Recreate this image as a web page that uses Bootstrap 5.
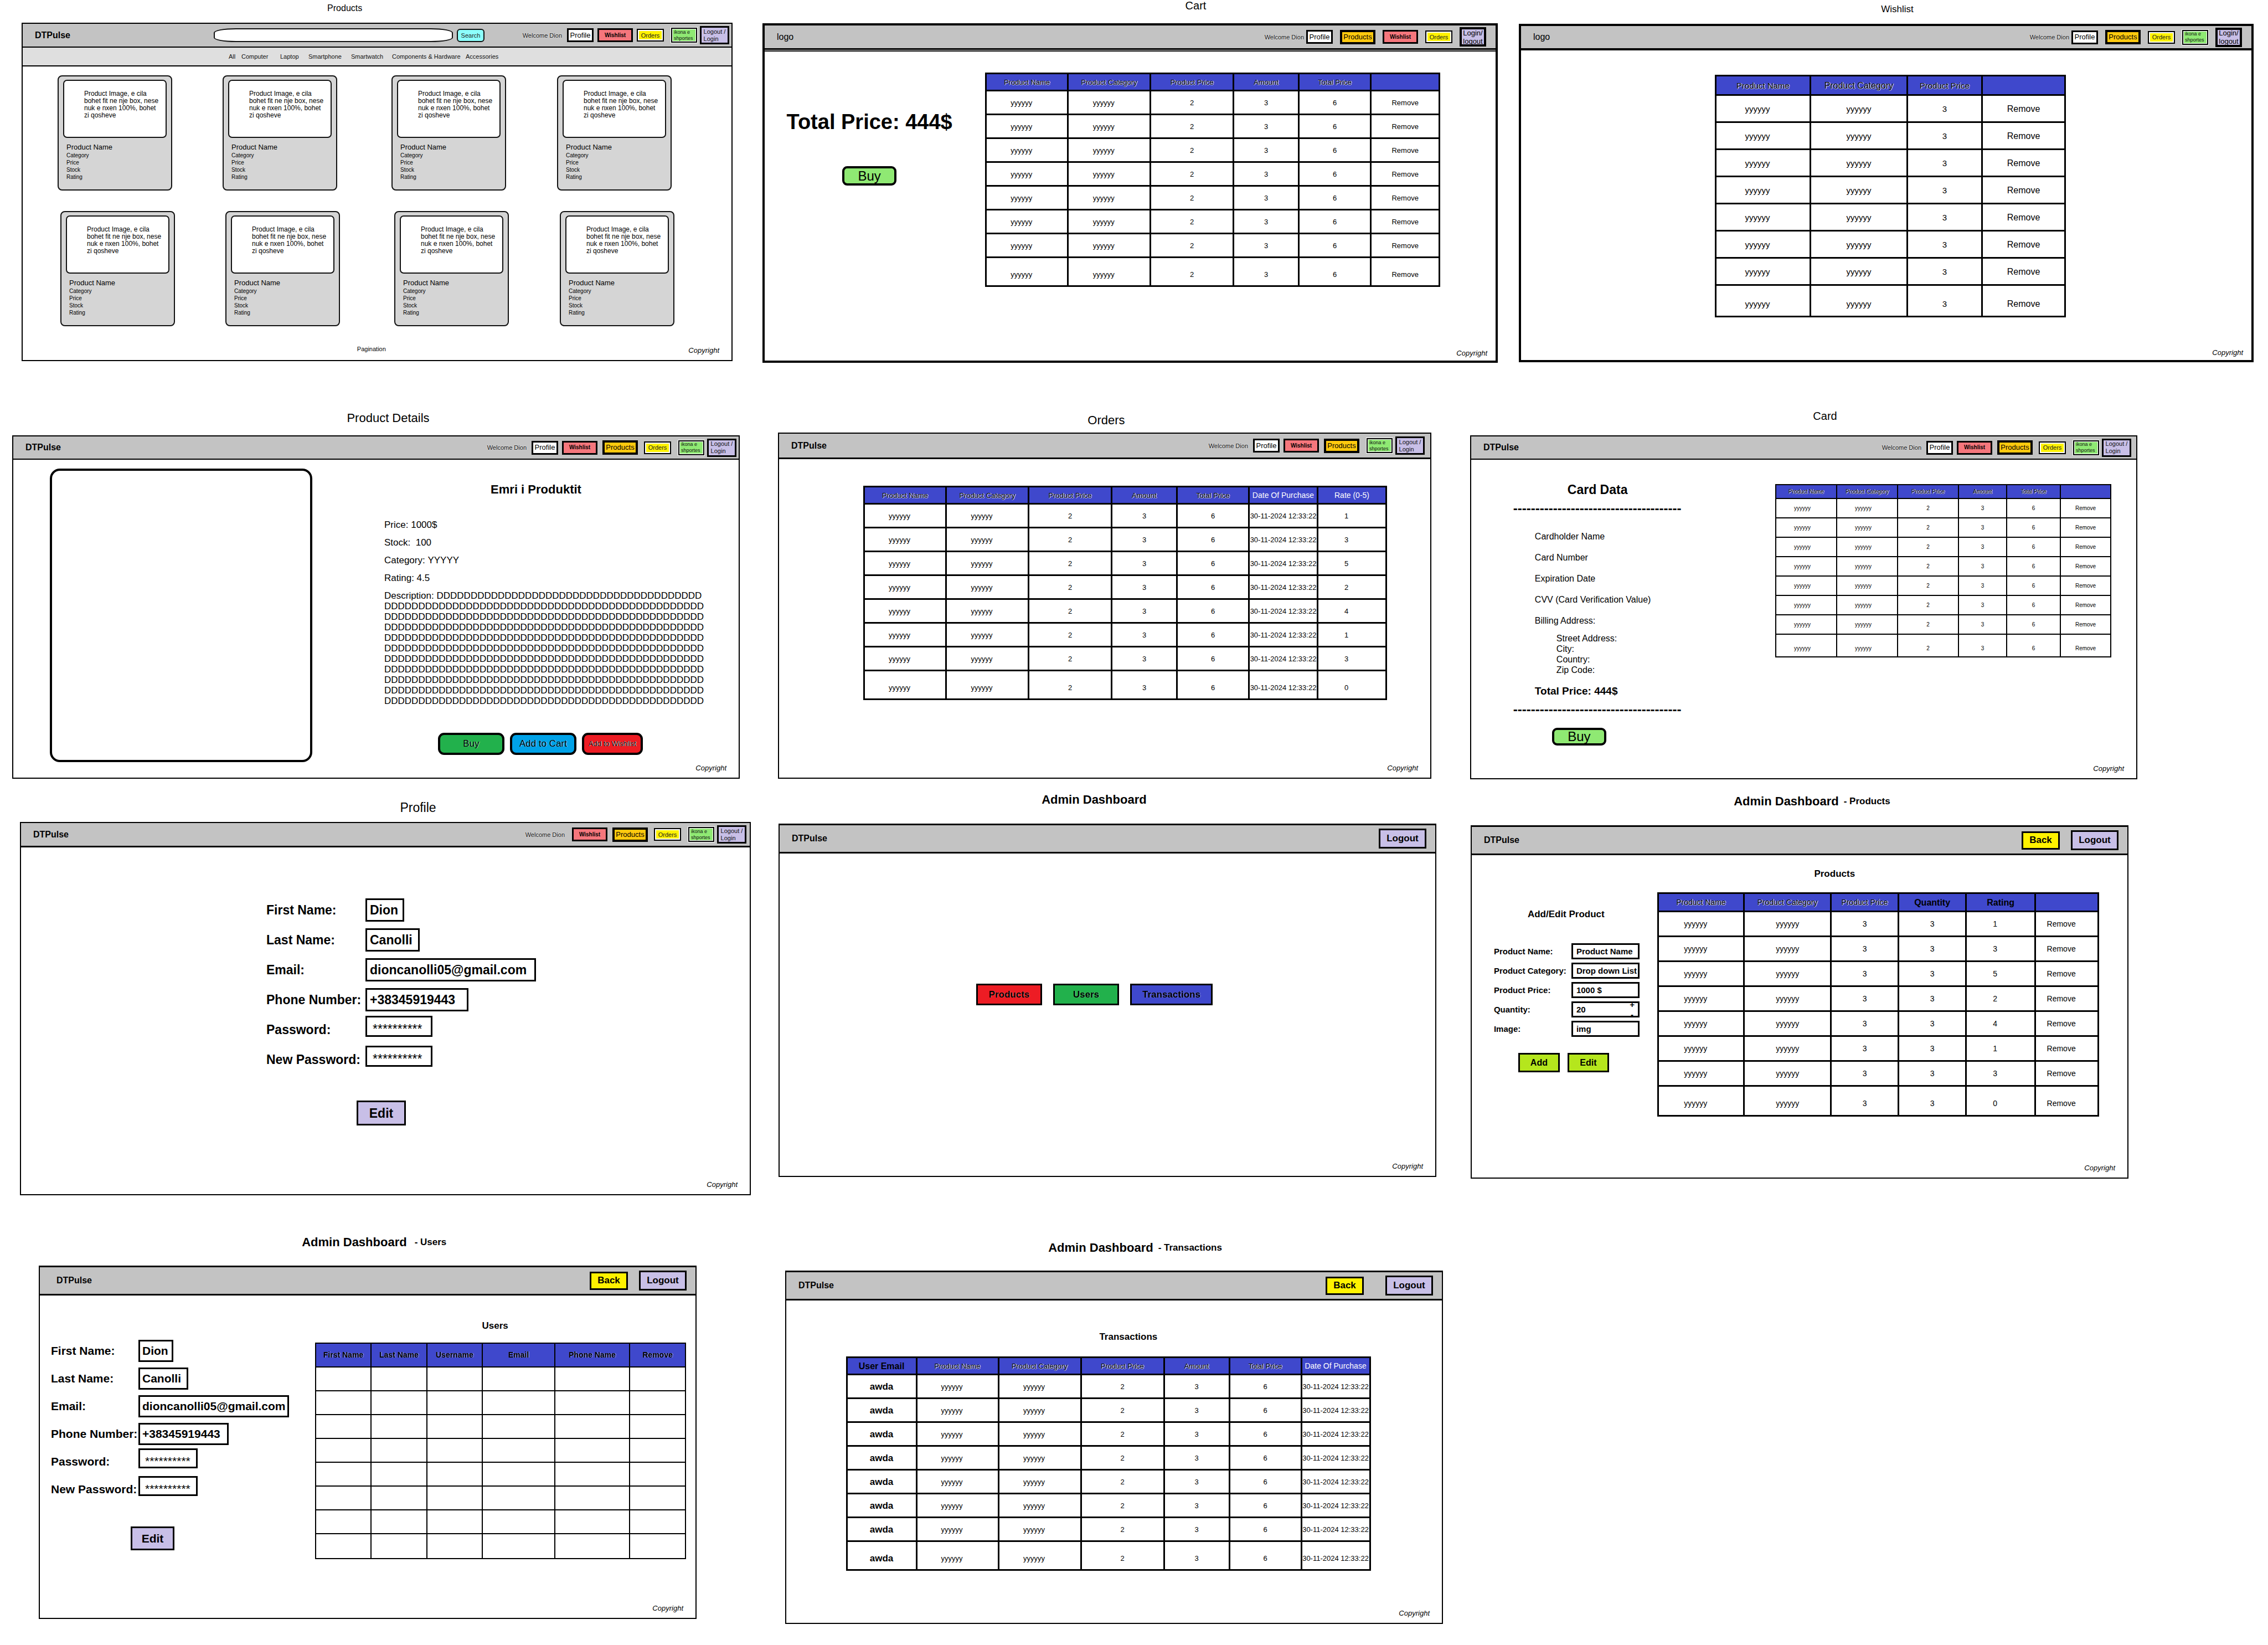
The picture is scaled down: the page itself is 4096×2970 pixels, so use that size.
<!DOCTYPE html>
<html lang="sq">
<head>
<meta charset="utf-8">
<meta name="viewport" content="width=device-width, initial-scale=1">
<title>DTPulse wireframes</title>
<link href="https://cdn.jsdelivr.net/npm/bootstrap@5.3.0/dist/css/bootstrap.min.css" rel="stylesheet">
<style>
body{font-family:"Liberation Sans",Arial,sans-serif;font-size:16px;line-height:20px;color:#000;background:#fff;overflow-x:hidden}
a{color:inherit;text-decoration:none}
/* rows of screens */
.strip{display:grid;align-items:start}
.strip-1{grid-template-columns:39fr 1284fr 54fr 1328fr 38fr 1327fr 26fr}
.strip-2{grid-template-columns:22fr 1314fr 69fr 1180fr 70fr 1205fr 236fr;margin-top:80px}
.strip-3{grid-template-columns:36fr 1320fr 50fr 1188fr 62fr 1188fr 252fr;margin-top:20px}
.strip-4{grid-template-columns:70fr 1188fr 160fr 1188fr 1490fr;margin-top:70px}
.screen{min-width:0}
.screen:nth-child(1){grid-column:2}
.screen:nth-child(2){grid-column:4}
.screen:nth-child(3){grid-column:6}
.screen-title{margin:0;line-height:20px;font-weight:400;white-space:nowrap;font-size:22px}
.screen-title small{font-size:17px;font-weight:700}
.s-products .screen-title{padding:5px 0 16px 43%;font-size:16px}
.s-cart .screen-title{padding:0 0 22px 57.5%;font-size:20px}
.s-wishlist .screen-title{padding:7px 0 16px 49.3%;font-size:17px}
.s-details .screen-title{padding:10px 0 21px 46%}
.s-orders .screen-title{padding:14px 0 12px 47.4%}
.s-card .screen-title{padding:6px 0 25px 51.4%;font-size:20px}
.s-profile .screen-title{padding:21px 0 16px 52%;font-size:23px}
.s-admin .screen-title{font-weight:700;padding:7px 0 33px 40%;display:flex;align-items:center;gap:9px}
.s-adm-products .screen-title{padding:10px 0 33px 40%}
.s-adm-users .screen-title{padding:5px 0 32px 40%;gap:14px}
.s-adm-tx .screen-title{padding:15px 0 31px 40%}
/* window frame */
.frame{display:flex;flex-direction:column;border:2px solid #000;background:#fff}
.s-products .frame{aspect-ratio:1284/611}
.s-cart .frame{aspect-ratio:1328/613;border-width:4px}
.s-wishlist .frame{aspect-ratio:1327/611;border-width:4px}
.s-details .frame{aspect-ratio:1314/620}
.s-orders .frame{aspect-ratio:1180/625}
.s-card .frame{aspect-ratio:1205/621}
.s-profile .frame{aspect-ratio:1320/674}
.s-admin .frame{aspect-ratio:1188/638;border-top-width:3px}
.topbar{background:#c3c3c3;border-bottom:2px solid #000;padding:0 4px 0 22px;min-height:42px;display:flex;align-items:center;flex-wrap:nowrap}
.s-cart .topbar,.s-wishlist .topbar{padding-right:17px;min-height:44px;border-bottom-width:4px}
.s-cart .topbar{border-bottom-width:3px}
.s-products .topbar{min-height:43px}
.s-orders .topbar{padding-right:10px;min-height:46px;border-bottom-width:3px}
.s-card .topbar{padding-right:9px}
.s-profile .topbar{padding-right:6px;min-height:44px;border-bottom-width:3px}
.s-admin .topbar{padding-right:16px;min-height:51px;border-bottom-width:3px}
.s-adm-users .topbar{padding-left:30px}
.logo{font-weight:700;font-size:16px}
.logo-plain{font-weight:400}
.menu{display:flex;align-items:center;margin-left:auto;white-space:nowrap}
.menu-adm{gap:20px}
.s-adm-tx .menu-adm{gap:39px}
.hello{font-size:11px;color:#111;text-shadow:0 0 2px #fff}
.nv{display:flex;align-items:center;justify-content:center;border:3px solid #000;border-radius:0;padding:0;color:#000;white-space:nowrap;flex:none;height:25px}
.nv-profile{width:48px;background:#fff;font-size:13px;margin-left:9px}
.nv-wish{width:64px;background:#f5767c;font-size:10px;font-weight:700;margin-left:7px}
.nv-prod{width:64px;height:26px;border-width:4px;background:#ffc90e;font-size:13px;margin-left:9px}
.nv-orders{width:49px;height:23px;border-width:2px;background:#fff200;font-size:11px;color:#222;box-shadow:inset 0 0 0 2px #fff;margin-left:11px}
.nv-basket{width:47px;height:27px;border-width:2px;background:#8fe973;font-size:9px;line-height:11px;color:#111;outline:1px solid #fff;justify-content:start;padding-left:3px;text-align:left;margin-left:13px;box-shadow:inset 0 0 0 1px #fff}
.nv-log{width:53px;height:33px;background:#c8bfe7;font-size:11px;line-height:13px;color:#111;text-align:left;margin-left:5px}
.nv-login{width:48px;height:35px;border-width:4px;background:#c8bfe7;font-size:13px;line-height:15px;text-align:left;margin-left:13px}
.s-products .nv-orders{margin-left:7px}
.s-profile .nv-wish{margin-left:13px}
.menu-wide .nv{margin-left:13px}
.menu-wide .nv-profile{margin-left:4px}
.act{border:3px solid #000;border-radius:0;padding:0;color:#000;font-weight:700;font-size:17px;height:36px;width:86px;background:#c8bfe7}
.act-back{background:#fff200;width:69px;height:33px}
.foot{margin-top:auto;display:flex;justify-content:flex-end;padding:0 22px 9px 0;font-size:13px;line-height:16px;font-style:italic}
.s-cart .foot,.s-wishlist .foot{padding:0 15px 5px 0}
.pager{margin-right:auto;padding-left:48%;font-size:11px;font-style:normal;line-height:11px}
/* products */
.searchbox{margin-left:259px;flex:0 1 432px;height:25px;border:2px solid #111;border-radius:40px/8px;background:#fff;padding:0 16px}
.searchbtn{margin-left:7px;width:50px;height:24px;border:2px solid #111;border-radius:6px;background:#8cfffb;font-size:11px;color:#222;padding:0}
.cats{display:grid;grid-template-columns:372fr 23fr 70fr 51fr 77fr 74fr 133fr 480fr;align-items:center;min-height:34px;background:#dfdfdf;border-bottom:2px solid #000;font-size:11px;white-space:nowrap;color:#111}
.cats a:first-child{grid-column:2}
.shelf{display:grid;grid-template-columns:63fr 207fr 91fr 207fr 98fr 207fr 92fr 207fr 108fr;padding-top:16px}
.shelf+.shelf{grid-template-columns:68fr 207fr 91fr 207fr 98fr 207fr 92fr 207fr 103fr;padding-top:37px}
.item:nth-child(1){grid-column:2}.item:nth-child(2){grid-column:4}.item:nth-child(3){grid-column:6}.item:nth-child(4){grid-column:8}
.item{border:2px solid #111;border-radius:8px;background:#d5d5d5;padding:6px 8px 16px;min-width:0;font-size:10px;line-height:13px}
.item-pic{border:2px solid #111;border-radius:7px;background:#fff;min-height:105px;padding:17px 0 0 36px;font-size:12px;white-space:nowrap;margin:0}
.item h3{font-size:13px;line-height:16px;font-weight:400;margin:9px 0 0 6px}
.item ul{list-style:none;margin:0 0 0 6px;padding:0}
/* data sheets */
.sheet{margin:0;table-layout:fixed;width:100%;border-collapse:collapse;color:#000;font-size:13px;line-height:15px;text-align:center;vertical-align:middle;border-color:#000}
.sheet>:not(caption)>*>*{border:3px solid #000;padding:0;background:transparent;color:#000;white-space:nowrap;box-shadow:none;vertical-align:middle}
.sheet>thead>tr>th{background:#3f48cc;font-weight:400;text-shadow:1px 0 0 #fff,0 1px 0 rgba(255,255,255,.6);height:31px}
.sheet>thead>tr>th.lit{color:#fff;font-size:14px;text-shadow:none}
.sheet>thead>tr>th.heavy{font-weight:700;font-size:16px;text-shadow:none}
.sheet>tbody>tr{height:43px}
.sheet>tbody>tr:last-child{height:52px}
.sheet>tbody>tr:last-child>td{padding-top:10px}
.sheet>tbody>tr>td.off{padding-right:20px}
.w148{width:148px}.w149{width:149px}.w150{width:150px}.w118{width:118px}.w130{width:130px}.w124{width:124px}.w126{width:126px}
.w171{width:171px}.w175{width:175px}.w135{width:135px}
.w110{width:110px}.w87{width:87px}.w97{width:97px}.w91{width:91px}
.w155{width:155px}.w157{width:157px}.w122{width:122px}.w125{width:125px}.w114{width:114px}
.w100{width:100px}
.sheet-wish{font-size:15px}
.sheet-wish>thead>tr>th{height:35px}
.sheet-wish>tbody>tr{height:49px}
.sheet-wish>tbody>tr:last-child{height:57px}
.sheet-wish .big{font-size:16px}
.sheet-card{font-size:10px;line-height:12px}
.sheet-card>:not(caption)>*>*{border-width:2px}
.sheet-card>thead>tr>th{height:25px}
.sheet-card>tbody>tr{height:35px}
.sheet-card>tbody>tr:last-child{height:41px}
.sheet-card>tbody>tr>td.off{padding-right:14px}
.sheet-adm{font-size:14px}
.sheet-adm>thead>tr>th{height:33px}
.sheet-adm>tbody>tr{height:45px}
.sheet-adm>tbody>tr:last-child{height:54px}
.sheet-users>:not(caption)>*>*{border-width:2px}
.sheet-users>thead>tr>th{height:43px;font-weight:700;font-size:14px;text-shadow:1px 0 0 rgba(255,255,255,.6)}
.sheet-users>tbody>tr:last-child{height:45px}
.mail{font-size:17px;font-weight:700}
/* cart */
.lay-cart{display:grid;grid-template-columns:37fr 305fr 57fr 821fr 100fr;margin-top:1px;border-top:2px solid #000;flex:1}
.cart-sum{grid-column:2;padding-top:107px;text-align:center;white-space:nowrap}
.cart-sum p{font-size:38px;line-height:40px;font-weight:700;margin:0 0 60px}
.buy{width:98px;height:35px;border:4px solid #000;border-radius:9px;background:#8fe973;font-size:24px;line-height:24px;padding:0;color:#000}
.cart-list{grid-column:4;padding-top:38px}
.lay-wish{display:grid;grid-template-columns:350fr 634fr 335fr;padding-top:44px}
.lay-wish>*{grid-column:2}
/* details */
.lay-details{display:grid;grid-template-columns:66fr 474fr 130fr minmax(0,564fr) 76fr}
.photo{grid-column:2;margin-top:16px;border:4px solid #000;border-radius:18px;aspect-ratio:474/530;align-self:start}
.facts{grid-column:4;padding-top:42px;font-size:17px;white-space:nowrap}
.facts h3{font-size:22px;line-height:24px;font-weight:700;margin:0 16px 42px 0;text-align:center}
.facts dl{margin:0;display:flex;flex-direction:column;gap:12px}
.facts dt,.facts dd{display:inline;font-weight:400;margin:0}
.facts .desc{line-height:19px}
.buys{display:flex;justify-content:center;gap:10px;margin-top:48px}
.buys button{height:40px;width:120px;border:4px solid #000;border-radius:11px;padding:0;font-size:17px;color:#000;text-shadow:1px 0 0 rgba(255,255,255,.6)}
.buys .b-wish{width:110px;font-size:13px;text-shadow:1px 0 0 #fff}
.c-green{background:#22b14c}.c-blue{background:#00a2e8}.c-red{background:#ed1c24}.c-indigo{background:#3f48cc}.c-lime{background:#b5e61d}
.lay-orders{display:grid;grid-template-columns:152fr 946fr 78fr;padding-top:48px}
.lay-orders>*{grid-column:2}
/* card payment */
.lay-card{display:grid;grid-template-columns:76fr 305fr 169fr 606fr 45fr}
.pay{grid-column:2;padding-top:42px;white-space:nowrap}
.pay h3{font-size:23px;line-height:24px;font-weight:700;margin:0 0 10px;text-align:center}
.dashes{font-size:24px;line-height:24px;font-weight:700}
.pay ul{list-style:none;padding:0;margin:29px 0 0 39px;display:flex;flex-direction:column;gap:18px}
.pay ul ul{margin:12px 0 0 39px;gap:0;line-height:19px}
.pay .total{font-size:19px;font-weight:700;margin:19px 0 11px 39px}
.pay .buy{margin:21px 0 0 70px;height:32px}
.pay-list{grid-column:4;padding-top:44px}
/* account forms */
.fields{display:grid;grid-template-columns:179px 1fr;align-items:center;grid-auto-rows:54px;font-weight:700;font-size:23px;white-space:nowrap}
.fields input,.fields select{font:inherit;color:#000;border:3px solid #000;border-radius:0;background:#fff;padding:0 0 0 5px;height:42px;margin:0;appearance:none;-webkit-appearance:none;min-width:0}
.fields input.pw{font-weight:400;height:38px;padding-top:10px;margin-bottom:12px;padding-left:10px;width:121px}
.f-a{width:70px}.f-b{width:98px}.f-c{width:308px}.f-d{width:186px}
.lay-profile{padding:86px 0 0 443px}
.lay-profile .act{font-size:23px;width:89px;height:45px;margin:47px 0 0 163px}
.hub{display:flex;align-items:center;gap:20px;padding:235px 0 0 30%}
.hub .act{height:39px;width:119px;text-shadow:1px 0 0 rgba(255,255,255,.4)}
.hub .act-tx{width:149px}
.lay-adm{display:grid;grid-template-columns:40fr 265fr 31fr 797fr 51fr}
.lay-adm h3{font-size:17px;line-height:20px;font-weight:700;margin:0}
.edit-prod{grid-column:2;padding-top:97px}
.lay-adm .edit-prod h3{margin:0 0 39px 61px}
.edit-prod .fields{grid-template-columns:140px 1fr;grid-auto-rows:35px;font-size:15px}
.edit-prod .fields input,.edit-prod .fields select{width:123px;height:29px;padding-left:6px}
.edit-prod .act{width:75px;height:35px;font-size:16px}
.step{position:relative;width:123px}
.step span{position:absolute;right:9px;top:0;bottom:0;display:flex;flex-direction:column;justify-content:space-between;line-height:11px;text-align:center}
.edit-btns{display:flex;gap:14px;margin:26px 0 0 44px}
.list-prod{grid-column:4;padding-top:24px}
.lay-adm .list-prod h3{margin:0 0 23px 35.5%}
.lay-users{display:grid;grid-template-columns:20fr 430fr 47fr 670fr 17fr}
.edit-user{grid-column:2;padding-top:75px}
.edit-user .fields{grid-template-columns:158px 1fr;grid-auto-rows:50px;font-size:21px}
.edit-user .fields input{height:40px;padding-left:4px}
.edit-user .fields input.pw{height:36px;width:107px;padding-left:9px}
.edit-user .f-a{width:63px}.edit-user .f-b{width:90px}.edit-user .f-c{width:272px}.edit-user .f-d{width:163px}
.edit-user .act{font-size:21px;width:79px;height:43px;margin:42px 0 0 144px}
.list-user{grid-column:4;padding-top:45px}
.list-user h3,.lay-tx h3{font-size:17px;line-height:20px;font-weight:700;margin:0 0 20px 45%}
.lay-tx{display:grid;grid-template-columns:108fr 947fr 129fr;padding-top:56px}
.lay-tx>*{grid-column:2}
.lay-tx h3{margin:0 0 25px 48.3%}
</style>
</head>
<body>
<main>
<div class="strip strip-1">
<section class="screen s-products">
<h2 class="screen-title">Products</h2>
<div class="frame">
<header class="topbar"><a href="#" class="logo">DTPulse</a>
<input class="searchbox" type="search" aria-label="Search products"><button class="searchbtn" type="button">Search</button>
<nav class="menu"><span class="hello">Welcome Dion</span><a href="#" class="nv nv-profile">Profile</a><a href="#" class="nv nv-wish">Wishlist</a><a href="#" class="nv nv-orders">Orders</a><a href="#" class="nv nv-basket">ikona e<br>shportes</a><a href="#" class="nv nv-log">Logout /<br>Login</a></nav></header>
<nav class="cats"><a href="#">All</a><a href="#">Computer</a><a href="#">Laptop</a><a href="#">Smartphone</a><a href="#">Smartwatch</a><a href="#">Components &amp; Hardware</a><a href="#">Accessories</a></nav>
<div class="shelf">
<article class="item"><p class="item-pic">Product Image, e cila<br>bohet fit ne nje box, nese<br>nuk e nxen 100%, bohet<br>zi qosheve</p><h3>Product Name</h3><ul><li>Category</li><li>Price</li><li>Stock</li><li>Rating</li></ul></article>
<article class="item"><p class="item-pic">Product Image, e cila<br>bohet fit ne nje box, nese<br>nuk e nxen 100%, bohet<br>zi qosheve</p><h3>Product Name</h3><ul><li>Category</li><li>Price</li><li>Stock</li><li>Rating</li></ul></article>
<article class="item"><p class="item-pic">Product Image, e cila<br>bohet fit ne nje box, nese<br>nuk e nxen 100%, bohet<br>zi qosheve</p><h3>Product Name</h3><ul><li>Category</li><li>Price</li><li>Stock</li><li>Rating</li></ul></article>
<article class="item"><p class="item-pic">Product Image, e cila<br>bohet fit ne nje box, nese<br>nuk e nxen 100%, bohet<br>zi qosheve</p><h3>Product Name</h3><ul><li>Category</li><li>Price</li><li>Stock</li><li>Rating</li></ul></article>
</div>
<div class="shelf">
<article class="item"><p class="item-pic">Product Image, e cila<br>bohet fit ne nje box, nese<br>nuk e nxen 100%, bohet<br>zi qosheve</p><h3>Product Name</h3><ul><li>Category</li><li>Price</li><li>Stock</li><li>Rating</li></ul></article>
<article class="item"><p class="item-pic">Product Image, e cila<br>bohet fit ne nje box, nese<br>nuk e nxen 100%, bohet<br>zi qosheve</p><h3>Product Name</h3><ul><li>Category</li><li>Price</li><li>Stock</li><li>Rating</li></ul></article>
<article class="item"><p class="item-pic">Product Image, e cila<br>bohet fit ne nje box, nese<br>nuk e nxen 100%, bohet<br>zi qosheve</p><h3>Product Name</h3><ul><li>Category</li><li>Price</li><li>Stock</li><li>Rating</li></ul></article>
<article class="item"><p class="item-pic">Product Image, e cila<br>bohet fit ne nje box, nese<br>nuk e nxen 100%, bohet<br>zi qosheve</p><h3>Product Name</h3><ul><li>Category</li><li>Price</li><li>Stock</li><li>Rating</li></ul></article>
</div>
<footer class="foot"><span class="pager">Pagination</span>Copyright</footer>
</div>
</section>

<section class="screen s-cart">
<h2 class="screen-title">Cart</h2>
<div class="frame">
<header class="topbar"><a href="#" class="logo logo-plain">logo</a>
<nav class="menu menu-wide"><span class="hello">Welcome Dion</span><a href="#" class="nv nv-profile">Profile</a><a href="#" class="nv nv-prod">Products</a><a href="#" class="nv nv-wish">Wishlist</a><a href="#" class="nv nv-orders">Orders</a><a href="#" class="nv nv-login">Login/<br>logout</a></nav></header>
<div class="lay-cart">
<div class="cart-sum"><p>Total Price: 444$</p><button class="buy" type="button">Buy</button></div>
<div class="cart-list">
<table class="table sheet"><colgroup><col class="w148"><col class="w149"><col class="w150"><col class="w118"><col class="w130"><col class="w124"></colgroup>
<thead><tr><th>Product Name</th><th>Product Category</th><th>Product Price</th><th>Amount</th><th>Total Price</th><th></th></tr></thead>
<tbody>
<tr><td class="off">yyyyyy</td><td class="off">yyyyyy</td><td>2</td><td>3</td><td>6</td><td><a href="#">Remove</a></td></tr>
<tr><td class="off">yyyyyy</td><td class="off">yyyyyy</td><td>2</td><td>3</td><td>6</td><td><a href="#">Remove</a></td></tr>
<tr><td class="off">yyyyyy</td><td class="off">yyyyyy</td><td>2</td><td>3</td><td>6</td><td><a href="#">Remove</a></td></tr>
<tr><td class="off">yyyyyy</td><td class="off">yyyyyy</td><td>2</td><td>3</td><td>6</td><td><a href="#">Remove</a></td></tr>
<tr><td class="off">yyyyyy</td><td class="off">yyyyyy</td><td>2</td><td>3</td><td>6</td><td><a href="#">Remove</a></td></tr>
<tr><td class="off">yyyyyy</td><td class="off">yyyyyy</td><td>2</td><td>3</td><td>6</td><td><a href="#">Remove</a></td></tr>
<tr><td class="off">yyyyyy</td><td class="off">yyyyyy</td><td>2</td><td>3</td><td>6</td><td><a href="#">Remove</a></td></tr>
<tr><td class="off">yyyyyy</td><td class="off">yyyyyy</td><td>2</td><td>3</td><td>6</td><td><a href="#">Remove</a></td></tr>
</tbody></table></div>
</div>
<footer class="foot">Copyright</footer>
</div>
</section>

<section class="screen s-wishlist">
<h2 class="screen-title">Wishlist</h2>
<div class="frame">
<header class="topbar"><a href="#" class="logo logo-plain">logo</a>
<nav class="menu menu-wide"><span class="hello">Welcome Dion</span><a href="#" class="nv nv-profile">Profile</a><a href="#" class="nv nv-prod">Products</a><a href="#" class="nv nv-orders">Orders</a><a href="#" class="nv nv-basket">ikona e<br>shportes</a><a href="#" class="nv nv-login">Login/<br>logout</a></nav></header>
<div class="lay-wish">
<table class="table sheet sheet-wish"><colgroup><col class="w171"><col class="w175"><col class="w135"><col class="w150"></colgroup>
<thead><tr><th>Product Name</th><th class="big">Product Category</th><th>Product Price</th><th></th></tr></thead>
<tbody>
<tr><td class="off">yyyyyy</td><td>yyyyyy</td><td>3</td><td class="big"><a href="#">Remove</a></td></tr>
<tr><td class="off">yyyyyy</td><td>yyyyyy</td><td>3</td><td class="big"><a href="#">Remove</a></td></tr>
<tr><td class="off">yyyyyy</td><td>yyyyyy</td><td>3</td><td class="big"><a href="#">Remove</a></td></tr>
<tr><td class="off">yyyyyy</td><td>yyyyyy</td><td>3</td><td class="big"><a href="#">Remove</a></td></tr>
<tr><td class="off">yyyyyy</td><td>yyyyyy</td><td>3</td><td class="big"><a href="#">Remove</a></td></tr>
<tr><td class="off">yyyyyy</td><td>yyyyyy</td><td>3</td><td class="big"><a href="#">Remove</a></td></tr>
<tr><td class="off">yyyyyy</td><td>yyyyyy</td><td>3</td><td class="big"><a href="#">Remove</a></td></tr>
<tr><td class="off">yyyyyy</td><td>yyyyyy</td><td>3</td><td class="big"><a href="#">Remove</a></td></tr>
</tbody></table>
</div>
<footer class="foot">Copyright</footer>
</div>
</section>
</div>

<div class="strip strip-2">
<section class="screen s-details">
<h2 class="screen-title">Product Details</h2>
<div class="frame">
<header class="topbar"><a href="#" class="logo">DTPulse</a>
<nav class="menu"><span class="hello">Welcome Dion</span><a href="#" class="nv nv-profile">Profile</a><a href="#" class="nv nv-wish">Wishlist</a><a href="#" class="nv nv-prod">Products</a><a href="#" class="nv nv-orders">Orders</a><a href="#" class="nv nv-basket">ikona e<br>shportes</a><a href="#" class="nv nv-log">Logout /<br>Login</a></nav></header>
<div class="lay-details">
<div class="photo"></div>
<div class="facts">
<h3>Emri i Produktit</h3>
<dl>
<div><dt>Price:</dt> <dd>1000$</dd></div>
<div><dt>Stock:</dt>&nbsp; <dd>100</dd></div>
<div><dt>Category:</dt> <dd>YYYYY</dd></div>
<div><dt>Rating:</dt> <dd>4.5</dd></div>
<div class="desc"><dt>Description:</dt> <dd>DDDDDDDDDDDDDDDDDDDDDDDDDDDDDDDDDDDDDDD<br>DDDDDDDDDDDDDDDDDDDDDDDDDDDDDDDDDDDDDDDDDDDDDDD<br>DDDDDDDDDDDDDDDDDDDDDDDDDDDDDDDDDDDDDDDDDDDDDDD<br>DDDDDDDDDDDDDDDDDDDDDDDDDDDDDDDDDDDDDDDDDDDDDDD<br>DDDDDDDDDDDDDDDDDDDDDDDDDDDDDDDDDDDDDDDDDDDDDDD<br>DDDDDDDDDDDDDDDDDDDDDDDDDDDDDDDDDDDDDDDDDDDDDDD<br>DDDDDDDDDDDDDDDDDDDDDDDDDDDDDDDDDDDDDDDDDDDDDDD<br>DDDDDDDDDDDDDDDDDDDDDDDDDDDDDDDDDDDDDDDDDDDDDDD<br>DDDDDDDDDDDDDDDDDDDDDDDDDDDDDDDDDDDDDDDDDDDDDDD<br>DDDDDDDDDDDDDDDDDDDDDDDDDDDDDDDDDDDDDDDDDDDDDDD<br>DDDDDDDDDDDDDDDDDDDDDDDDDDDDDDDDDDDDDDDDDDDDDDD</dd></div>
</dl>
<div class="buys"><button type="button" class="c-green">Buy</button><button type="button" class="c-blue">Add to Cart</button><button type="button" class="c-red b-wish">Add to Wishlist</button></div>
</div>
</div>
<footer class="foot">Copyright</footer>
</div>
</section>

<section class="screen s-orders">
<h2 class="screen-title">Orders</h2>
<div class="frame">
<header class="topbar"><a href="#" class="logo">DTPulse</a>
<nav class="menu"><span class="hello">Welcome Dion</span><a href="#" class="nv nv-profile">Profile</a><a href="#" class="nv nv-wish">Wishlist</a><a href="#" class="nv nv-prod">Products</a><a href="#" class="nv nv-basket">ikona e<br>shportes</a><a href="#" class="nv nv-log">Logout /<br>Login</a></nav></header>
<div class="lay-orders">
<table class="table sheet"><colgroup><col class="w148"><col class="w149"><col class="w150"><col class="w118"><col class="w130"><col class="w124"><col class="w124"></colgroup>
<thead><tr><th>Product Name</th><th>Product Category</th><th>Product Price</th><th>Amount</th><th>Total Price</th><th class="lit">Date Of Purchase</th><th class="lit">Rate (0-5)</th></tr></thead>
<tbody>
<tr><td class="off">yyyyyy</td><td class="off">yyyyyy</td><td>2</td><td>3</td><td>6</td><td>30-11-2024 12:33:22</td><td class="off">1</td></tr>
<tr><td class="off">yyyyyy</td><td class="off">yyyyyy</td><td>2</td><td>3</td><td>6</td><td>30-11-2024 12:33:22</td><td class="off">3</td></tr>
<tr><td class="off">yyyyyy</td><td class="off">yyyyyy</td><td>2</td><td>3</td><td>6</td><td>30-11-2024 12:33:22</td><td class="off">5</td></tr>
<tr><td class="off">yyyyyy</td><td class="off">yyyyyy</td><td>2</td><td>3</td><td>6</td><td>30-11-2024 12:33:22</td><td class="off">2</td></tr>
<tr><td class="off">yyyyyy</td><td class="off">yyyyyy</td><td>2</td><td>3</td><td>6</td><td>30-11-2024 12:33:22</td><td class="off">4</td></tr>
<tr><td class="off">yyyyyy</td><td class="off">yyyyyy</td><td>2</td><td>3</td><td>6</td><td>30-11-2024 12:33:22</td><td class="off">1</td></tr>
<tr><td class="off">yyyyyy</td><td class="off">yyyyyy</td><td>2</td><td>3</td><td>6</td><td>30-11-2024 12:33:22</td><td class="off">3</td></tr>
<tr><td class="off">yyyyyy</td><td class="off">yyyyyy</td><td>2</td><td>3</td><td>6</td><td>30-11-2024 12:33:22</td><td class="off">0</td></tr>
</tbody></table>
</div>
<footer class="foot">Copyright</footer>
</div>
</section>

<section class="screen s-card">
<h2 class="screen-title">Card</h2>
<div class="frame">
<header class="topbar"><a href="#" class="logo">DTPulse</a>
<nav class="menu"><span class="hello">Welcome Dion</span><a href="#" class="nv nv-profile">Profile</a><a href="#" class="nv nv-wish">Wishlist</a><a href="#" class="nv nv-prod">Products</a><a href="#" class="nv nv-orders">Orders</a><a href="#" class="nv nv-basket">ikona e<br>shportes</a><a href="#" class="nv nv-log">Logout /<br>Login</a></nav></header>
<div class="lay-card">
<div class="pay">
<h3>Card Data</h3>
<div class="dashes">--------------------------------------</div>
<ul><li>Cardholder Name</li><li>Card Number</li><li>Expiration Date</li><li>CVV (Card Verification Value)</li><li>Billing Address:<ul><li>Street Address:</li><li>City:</li><li>Country:</li><li>Zip Code:</li></ul></li></ul>
<p class="total">Total Price: 444$</p>
<div class="dashes">--------------------------------------</div>
<button class="buy" type="button">Buy</button>
</div>
<div class="pay-list">
<table class="table sheet sheet-card"><colgroup><col class="w110"><col class="w110"><col class="w110"><col class="w87"><col class="w97"><col class="w91"></colgroup>
<thead><tr><th>Product Name</th><th>Product Category</th><th>Product Price</th><th>Amount</th><th>Total Price</th><th></th></tr></thead>
<tbody>
<tr><td class="off">yyyyyy</td><td class="off">yyyyyy</td><td>2</td><td>3</td><td>6</td><td><a href="#">Remove</a></td></tr>
<tr><td class="off">yyyyyy</td><td class="off">yyyyyy</td><td>2</td><td>3</td><td>6</td><td><a href="#">Remove</a></td></tr>
<tr><td class="off">yyyyyy</td><td class="off">yyyyyy</td><td>2</td><td>3</td><td>6</td><td><a href="#">Remove</a></td></tr>
<tr><td class="off">yyyyyy</td><td class="off">yyyyyy</td><td>2</td><td>3</td><td>6</td><td><a href="#">Remove</a></td></tr>
<tr><td class="off">yyyyyy</td><td class="off">yyyyyy</td><td>2</td><td>3</td><td>6</td><td><a href="#">Remove</a></td></tr>
<tr><td class="off">yyyyyy</td><td class="off">yyyyyy</td><td>2</td><td>3</td><td>6</td><td><a href="#">Remove</a></td></tr>
<tr><td class="off">yyyyyy</td><td class="off">yyyyyy</td><td>2</td><td>3</td><td>6</td><td><a href="#">Remove</a></td></tr>
<tr><td class="off">yyyyyy</td><td class="off">yyyyyy</td><td>2</td><td>3</td><td>6</td><td><a href="#">Remove</a></td></tr>
</tbody></table></div>
</div>
<footer class="foot">Copyright</footer>
</div>
</section>
</div>

<div class="strip strip-3">
<section class="screen s-profile">
<h2 class="screen-title">Profile</h2>
<div class="frame">
<header class="topbar"><a href="#" class="logo">DTPulse</a>
<nav class="menu"><span class="hello">Welcome Dion</span><a href="#" class="nv nv-wish">Wishlist</a><a href="#" class="nv nv-prod">Products</a><a href="#" class="nv nv-orders">Orders</a><a href="#" class="nv nv-basket">ikona e<br>shportes</a><a href="#" class="nv nv-log">Logout /<br>Login</a></nav></header>
<form class="lay-profile">
<div class="fields">
<label for="p1">First Name:</label><input id="p1" class="f-a" value="Dion">
<label for="p2">Last Name:</label><input id="p2" class="f-b" value="Canolli">
<label for="p3">Email:</label><input id="p3" class="f-c" value="dioncanolli05@gmail.com">
<label for="p4">Phone Number:</label><input id="p4" class="f-d" value="+38345919443">
<label for="p5">Password:</label><input id="p5" class="pw" value="**********">
<label for="p6">New Password:</label><input id="p6" class="pw" value="**********">
</div>
<button class="act" type="button">Edit</button>
</form>
<footer class="foot">Copyright</footer>
</div>
</section>

<section class="screen s-admin">
<h2 class="screen-title">Admin Dashboard</h2>
<div class="frame">
<header class="topbar"><a href="#" class="logo">DTPulse</a><div class="menu menu-adm"><button type="button" class="act">Logout</button></div></header>
<div class="hub"><button type="button" class="act c-red">Products</button><button type="button" class="act c-green">Users</button><button type="button" class="act act-tx c-indigo">Transactions</button></div>
<footer class="foot">Copyright</footer>
</div>
</section>

<section class="screen s-admin s-adm-products">
<h2 class="screen-title"><span>Admin Dashboard</span><small>- Products</small></h2>
<div class="frame">
<header class="topbar"><a href="#" class="logo">DTPulse</a><div class="menu menu-adm"><button type="button" class="act act-back">Back</button><button type="button" class="act">Logout</button></div></header>
<div class="lay-adm">
<form class="edit-prod">
<h3>Add/Edit Product</h3>
<div class="fields">
<label for="a1">Product Name:</label><input id="a1" value="Product Name">
<label for="a2">Product Category:</label><select id="a2"><option>Drop down List</option></select>
<label for="a3">Product Price:</label><input id="a3" value="1000 $">
<label for="a4">Quantity:</label><div class="step"><input id="a4" value="20"><span><b>+</b><b>-</b></span></div>
<label for="a5">Image:</label><input id="a5" value="img">
</div>
<div class="edit-btns"><button type="button" class="act c-lime">Add</button><button type="button" class="act c-lime">Edit</button></div>
</form>
<div class="list-prod">
<h3>Products</h3>
<table class="table sheet sheet-adm"><colgroup><col class="w155"><col class="w157"><col class="w122"><col class="w122"><col class="w125"><col class="w114"></colgroup>
<thead><tr><th>Product Name</th><th>Product Category</th><th>Product Price</th><th class="heavy">Quantity</th><th class="heavy">Rating</th><th></th></tr></thead>
<tbody>
<tr><td class="off">yyyyyy</td><td>yyyyyy</td><td>3</td><td>3</td><td class="off">1</td><td class="off"><a href="#">Remove</a></td></tr>
<tr><td class="off">yyyyyy</td><td>yyyyyy</td><td>3</td><td>3</td><td class="off">3</td><td class="off"><a href="#">Remove</a></td></tr>
<tr><td class="off">yyyyyy</td><td>yyyyyy</td><td>3</td><td>3</td><td class="off">5</td><td class="off"><a href="#">Remove</a></td></tr>
<tr><td class="off">yyyyyy</td><td>yyyyyy</td><td>3</td><td>3</td><td class="off">2</td><td class="off"><a href="#">Remove</a></td></tr>
<tr><td class="off">yyyyyy</td><td>yyyyyy</td><td>3</td><td>3</td><td class="off">4</td><td class="off"><a href="#">Remove</a></td></tr>
<tr><td class="off">yyyyyy</td><td>yyyyyy</td><td>3</td><td>3</td><td class="off">1</td><td class="off"><a href="#">Remove</a></td></tr>
<tr><td class="off">yyyyyy</td><td>yyyyyy</td><td>3</td><td>3</td><td class="off">3</td><td class="off"><a href="#">Remove</a></td></tr>
<tr><td class="off">yyyyyy</td><td>yyyyyy</td><td>3</td><td>3</td><td class="off">0</td><td class="off"><a href="#">Remove</a></td></tr>
</tbody></table>
</div>
</div>
<footer class="foot">Copyright</footer>
</div>
</section>
</div>

<div class="strip strip-4">
<section class="screen s-admin s-adm-users">
<h2 class="screen-title"><span>Admin Dashboard</span><small>- Users</small></h2>
<div class="frame">
<header class="topbar"><a href="#" class="logo">DTPulse</a><div class="menu menu-adm"><button type="button" class="act act-back">Back</button><button type="button" class="act">Logout</button></div></header>
<div class="lay-users">
<form class="edit-user">
<div class="fields">
<label for="u1">First Name:</label><input id="u1" class="f-a" value="Dion">
<label for="u2">Last Name:</label><input id="u2" class="f-b" value="Canolli">
<label for="u3">Email:</label><input id="u3" class="f-c" value="dioncanolli05@gmail.com">
<label for="u4">Phone Number:</label><input id="u4" class="f-d" value="+38345919443">
<label for="u5">Password:</label><input id="u5" class="pw" value="**********">
<label for="u6">New Password:</label><input id="u6" class="pw" value="**********">
</div>
<button class="act" type="button">Edit</button>
</form>
<div class="list-user">
<h3>Users</h3>
<table class="table sheet sheet-users"><colgroup><col class="w100"><col class="w100"><col class="w100"><col class="w130"><col class="w135"><col class="w100"></colgroup>
<thead><tr><th>First Name</th><th>Last Name</th><th>Username</th><th>Email</th><th>Phone Name</th><th>Remove</th></tr></thead>
<tbody>
<tr><td></td><td></td><td></td><td></td><td></td><td></td></tr>
<tr><td></td><td></td><td></td><td></td><td></td><td></td></tr>
<tr><td></td><td></td><td></td><td></td><td></td><td></td></tr>
<tr><td></td><td></td><td></td><td></td><td></td><td></td></tr>
<tr><td></td><td></td><td></td><td></td><td></td><td></td></tr>
<tr><td></td><td></td><td></td><td></td><td></td><td></td></tr>
<tr><td></td><td></td><td></td><td></td><td></td><td></td></tr>
<tr><td></td><td></td><td></td><td></td><td></td><td></td></tr>
</tbody></table>
</div>
</div>
<footer class="foot">Copyright</footer>
</div>
</section>

<section class="screen s-admin s-adm-tx">
<h2 class="screen-title"><span>Admin Dashboard</span><small>- Transactions</small></h2>
<div class="frame">
<header class="topbar"><a href="#" class="logo">DTPulse</a><div class="menu menu-adm"><button type="button" class="act act-back">Back</button><button type="button" class="act">Logout</button></div></header>
<div class="lay-tx">
<h3>Transactions</h3>
<table class="table sheet"><colgroup><col class="w126"><col class="w148"><col class="w149"><col class="w150"><col class="w118"><col class="w130"><col class="w124"></colgroup>
<thead><tr><th class="heavy">User Email</th><th>Product Name</th><th>Product Category</th><th>Product Price</th><th>Amount</th><th>Total Price</th><th class="lit">Date Of Purchase</th></tr></thead>
<tbody>
<tr><td class="mail">awda</td><td class="off">yyyyyy</td><td class="off">yyyyyy</td><td>2</td><td>3</td><td>6</td><td>30-11-2024 12:33:22</td></tr>
<tr><td class="mail">awda</td><td class="off">yyyyyy</td><td class="off">yyyyyy</td><td>2</td><td>3</td><td>6</td><td>30-11-2024 12:33:22</td></tr>
<tr><td class="mail">awda</td><td class="off">yyyyyy</td><td class="off">yyyyyy</td><td>2</td><td>3</td><td>6</td><td>30-11-2024 12:33:22</td></tr>
<tr><td class="mail">awda</td><td class="off">yyyyyy</td><td class="off">yyyyyy</td><td>2</td><td>3</td><td>6</td><td>30-11-2024 12:33:22</td></tr>
<tr><td class="mail">awda</td><td class="off">yyyyyy</td><td class="off">yyyyyy</td><td>2</td><td>3</td><td>6</td><td>30-11-2024 12:33:22</td></tr>
<tr><td class="mail">awda</td><td class="off">yyyyyy</td><td class="off">yyyyyy</td><td>2</td><td>3</td><td>6</td><td>30-11-2024 12:33:22</td></tr>
<tr><td class="mail">awda</td><td class="off">yyyyyy</td><td class="off">yyyyyy</td><td>2</td><td>3</td><td>6</td><td>30-11-2024 12:33:22</td></tr>
<tr><td class="mail">awda</td><td class="off">yyyyyy</td><td class="off">yyyyyy</td><td>2</td><td>3</td><td>6</td><td>30-11-2024 12:33:22</td></tr>
</tbody></table>
</div>
<footer class="foot">Copyright</footer>
</div>
</section>
</div>
</main>
<script src="https://cdn.jsdelivr.net/npm/bootstrap@5.3.0/dist/js/bootstrap.bundle.min.js"></script>
</body>
</html>
